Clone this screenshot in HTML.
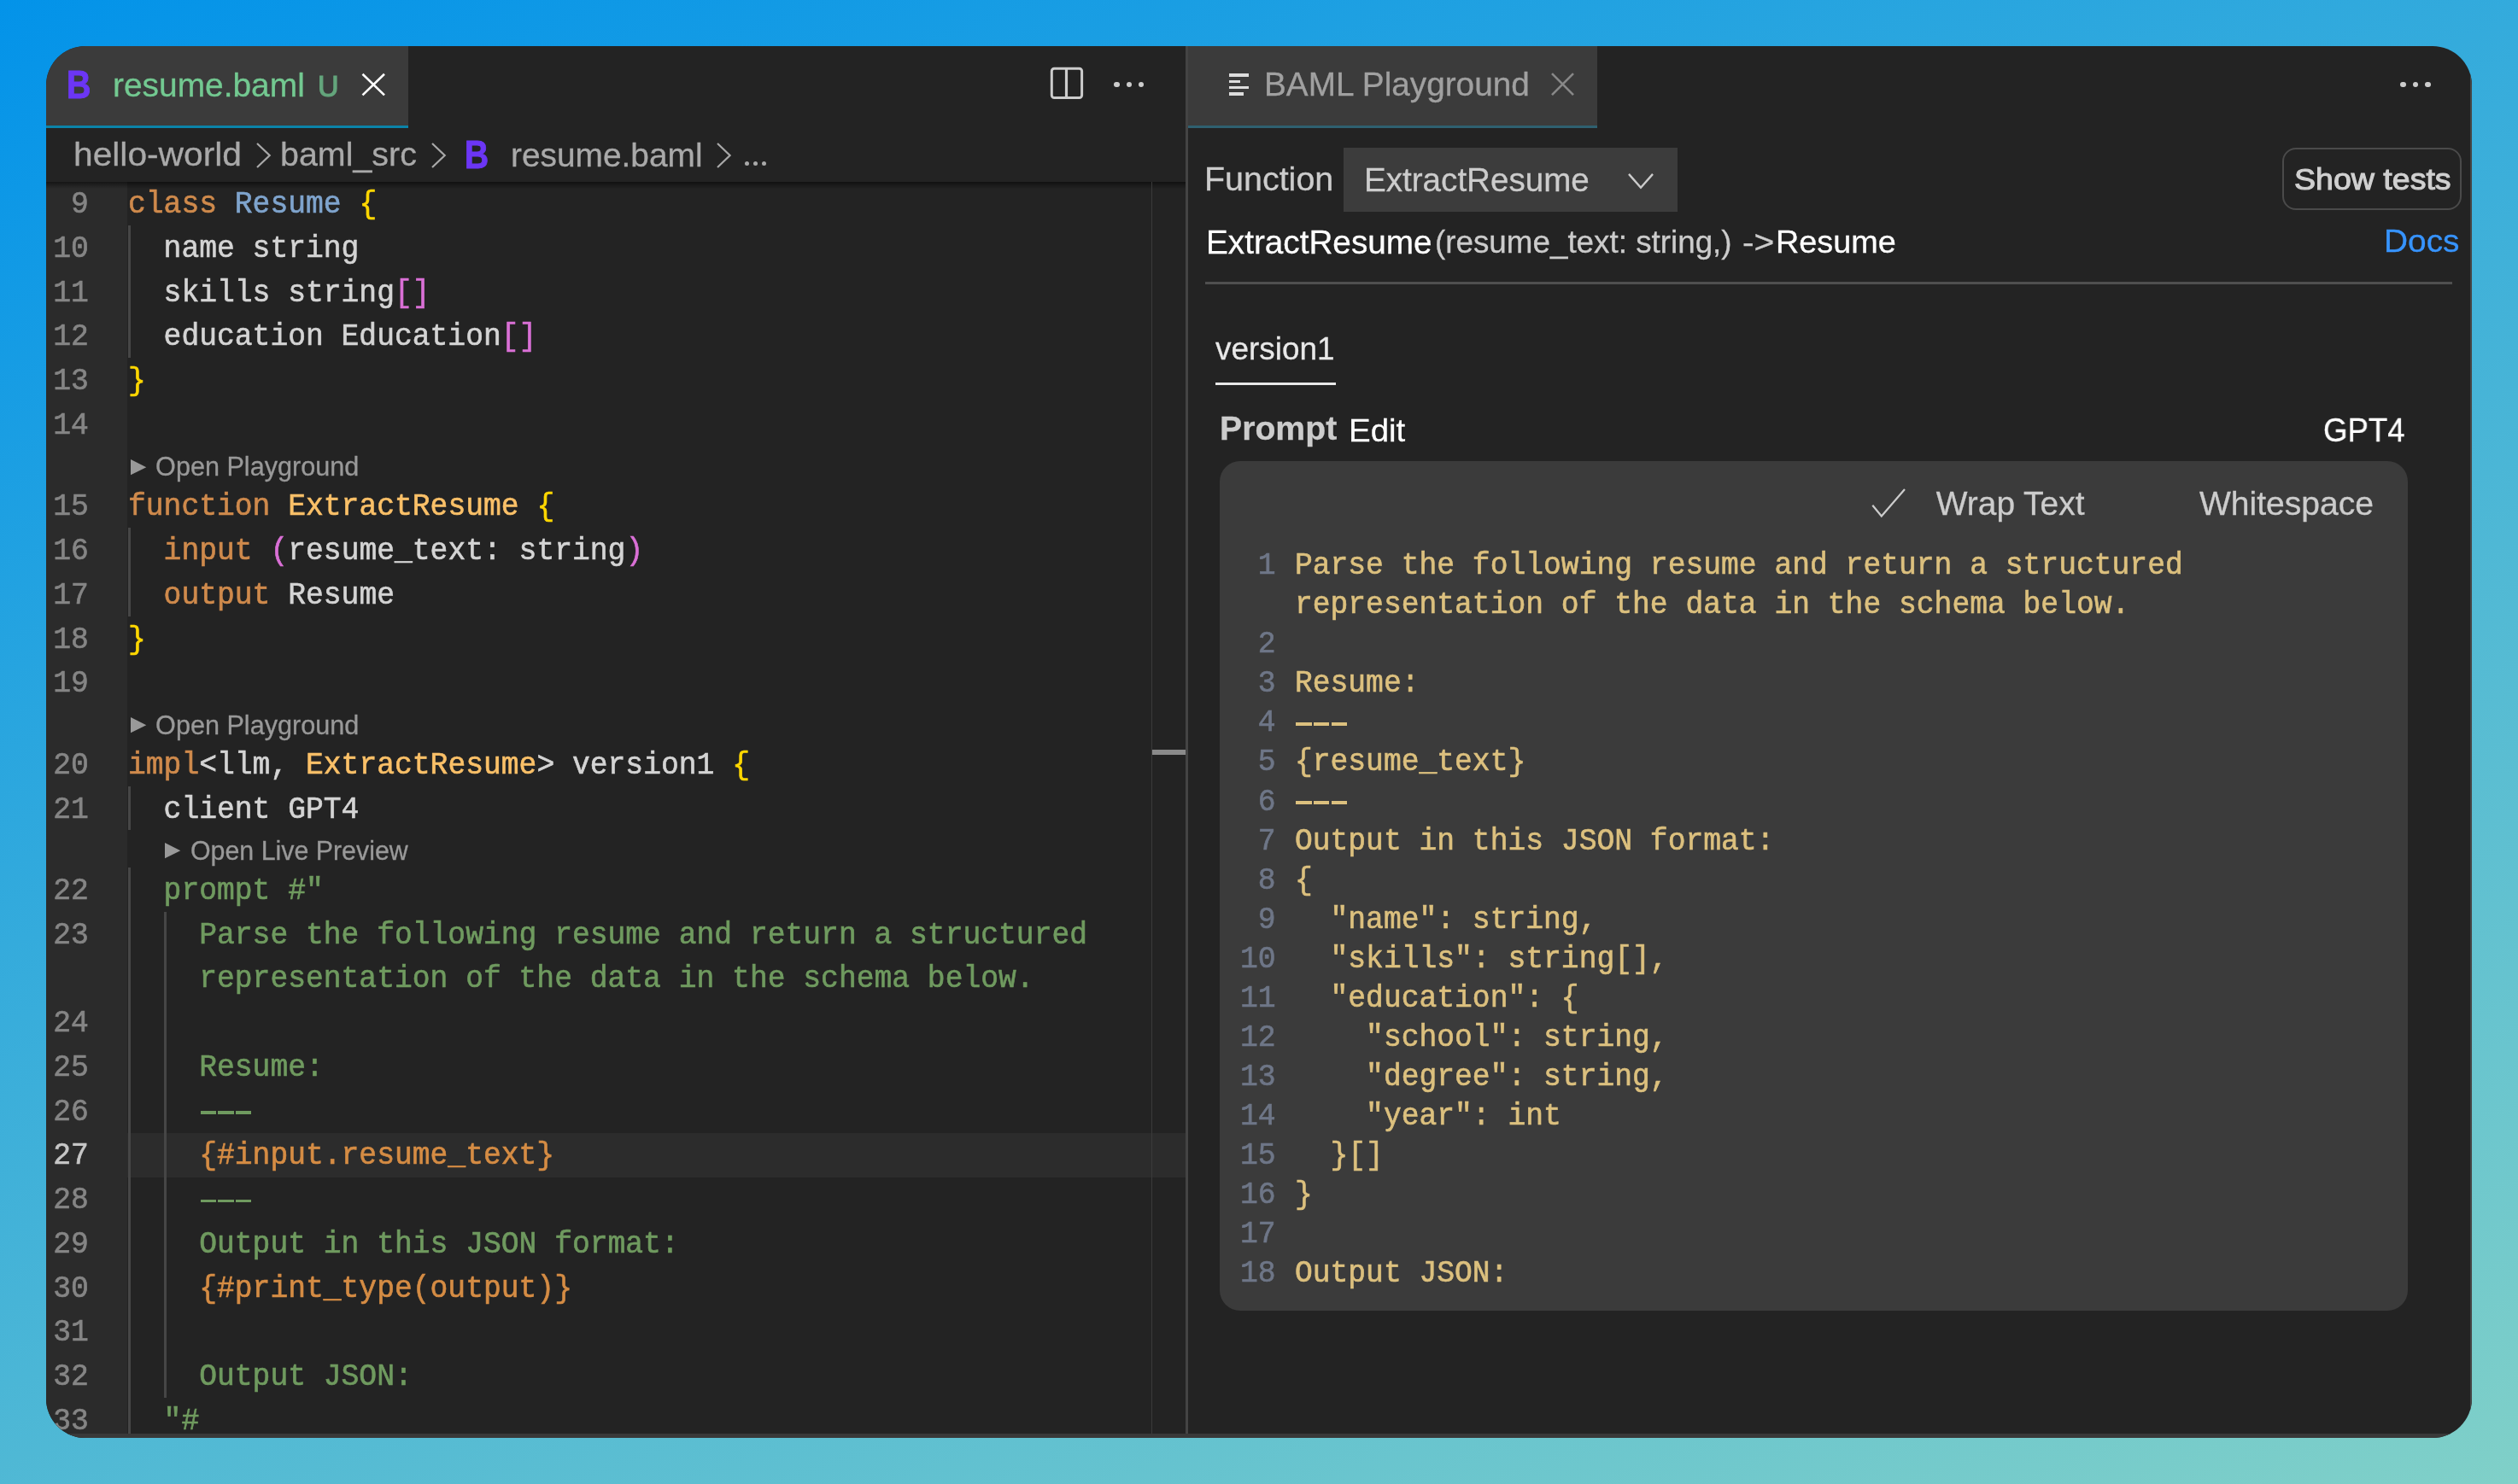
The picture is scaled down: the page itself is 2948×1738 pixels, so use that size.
<!DOCTYPE html>
<html><head><meta charset="utf-8"><title>resume.baml</title><style>
html,body{margin:0;padding:0}
body{width:2948px;height:1738px;position:relative;overflow:hidden;background:linear-gradient(159.8deg,#0393e9 0%,#80d0c8 100%);font-family:"Liberation Sans",sans-serif}
.win{position:absolute;left:54px;top:54px;width:2840px;height:1630px;border-radius:46px;overflow:hidden;background:#232323}
.inner{position:absolute;left:-54px;top:-54px;width:2948px;height:1738px;will-change:transform}
.t{position:absolute;white-space:pre;font-family:"Liberation Sans",sans-serif;-webkit-text-stroke:0.3px currentColor}
.r{position:absolute}
.m{position:absolute;white-space:pre;font-family:"Liberation Mono",monospace;font-size:34.67px;transform:scaleY(1.07);transform-origin:0 37.8px;margin-top:-1.2px;-webkit-text-stroke:0.6px currentColor}
.ln{text-align:right}
</style></head>
<body>
<div class="win">
<div class="inner">
<div class="r" style="left:54px;top:54px;width:424px;height:93px;background:#3b3b3b;"></div>
<div class="r" style="left:54px;top:147px;width:424px;height:3px;background:#0b83a8;"></div>
<div class="t" style="left:77.89px;top:75.45px;font-size:47px;line-height:47px;color:#6c36f5;font-weight:bold;transform:scaleX(0.8379);transform-origin:0 0;-webkit-text-stroke:1px #6c36f5;">B</div>
<div class="t" style="left:132.16px;top:80.53px;font-size:38.2px;line-height:38.2px;color:#73c991;transform:scaleX(1.0184);transform-origin:0 0;">resume.baml</div>
<div class="t" style="left:371.62px;top:83.67px;font-size:34.5px;line-height:34.5px;color:#64a57c;transform:scaleX(0.9905);transform-origin:0 0;-webkit-text-stroke:1.1px #64a57c;">U</div>
<svg class="r" style="left:420px;top:82px" width="35" height="34"><path d="M4.5 4.7 L30 29.4 M30 4.7 L4.5 29.4" stroke="#ffffff" stroke-width="2.6" fill="none"/></svg>
<svg class="r" style="left:1226px;top:75px" width="46" height="46"><rect x="5.3" y="5.3" width="35.3" height="34.2" rx="3" stroke="#cccccc" stroke-width="3" fill="none"/><path d="M22.5 5 V39.5" stroke="#cccccc" stroke-width="3.2"/></svg>
<div class="r" style="left:1304.2px;top:95.7px;width:6.4px;height:6.4px;border-radius:50%;background:#cccccc"></div>
<div class="r" style="left:1318.5px;top:95.7px;width:6.4px;height:6.4px;border-radius:50%;background:#cccccc"></div>
<div class="r" style="left:1333.0px;top:95.7px;width:6.4px;height:6.4px;border-radius:50%;background:#cccccc"></div>
<div class="t" style="left:86.34px;top:161.34px;font-size:39.6px;line-height:39.6px;color:#a9a9a9;transform:scaleX(1.0289);transform-origin:0 0;">hello-world</div>
<svg class="r" style="left:297.5px;top:164.5px" width="20.7" height="34.0"><path d="M3 3 L17.7 17.0 L3 31.0" stroke="#a9a9a9" stroke-width="2.2" fill="none"/></svg>
<div class="t" style="left:328.17px;top:162.02px;font-size:38.8px;line-height:38.8px;color:#a9a9a9;transform:scaleX(1.0155);transform-origin:0 0;">baml_src</div>
<svg class="r" style="left:503.3px;top:164.5px" width="20.7" height="34.0"><path d="M3 3 L17.7 17.0 L3 31.0" stroke="#a9a9a9" stroke-width="2.2" fill="none"/></svg>
<div class="t" style="left:543.82px;top:157.45px;font-size:47px;line-height:47px;color:#6c36f5;font-weight:bold;transform:scaleX(0.8276);transform-origin:0 0;-webkit-text-stroke:1px #6c36f5;">B</div>
<div class="t" style="left:597.66px;top:162.53px;font-size:38.2px;line-height:38.2px;color:#a9a9a9;transform:scaleX(1.0175);transform-origin:0 0;">resume.baml</div>
<svg class="r" style="left:836.9px;top:164.5px" width="20.6" height="34.0"><path d="M3 3 L17.6 17.0 L3 31.0" stroke="#a9a9a9" stroke-width="2.2" fill="none"/></svg>
<div class="r" style="left:871.9px;top:188.8px;width:5.2px;height:5.2px;border-radius:50%;background:#a9a9a9"></div>
<div class="r" style="left:881.7px;top:188.8px;width:5.2px;height:5.2px;border-radius:50%;background:#a9a9a9"></div>
<div class="r" style="left:891.5px;top:188.8px;width:5.2px;height:5.2px;border-radius:50%;background:#a9a9a9"></div>
<div class="r" style="left:54px;top:213px;width:95px;height:1471px;background:#2b2b2b;"></div>
<div class="r" style="left:149px;top:1326.6px;width:1239px;height:52.200000000000045px;background:#2c2c2c;"></div>
<div class="r" style="left:54px;top:213px;width:1334px;height:8px;background:linear-gradient(rgba(0,0,0,0.5),rgba(0,0,0,0))"></div>
<div class="r" style="left:150px;top:264.2px;width:3px;height:155.2px;background:#464646;"></div>
<div class="r" style="left:150px;top:618.3px;width:3px;height:103.5px;background:#464646;"></div>
<div class="r" style="left:150px;top:920.7px;width:3px;height:51.799999999999955px;background:#464646;"></div>
<div class="r" style="left:150px;top:1016.1px;width:3px;height:672.9px;background:#464646;"></div>
<div class="r" style="left:192px;top:1067.8px;width:3px;height:569.4000000000001px;background:#464646;"></div>
<div class="m" style="left:150.0px;top:212.40px;line-height:57.15px"><span style="color:#cf8a4c">class</span><span style="color:#d4d4d4"> </span><span style="color:#7fa4cd">Resume</span><span style="color:#d4d4d4"> </span><span style="color:#ffd700">{</span></div>
<div class="m ln" style="left:3px;width:100.8px;top:212.40px;line-height:57.15px;color:#858585">9</div>
<div class="m" style="left:150.0px;top:264.16px;line-height:57.15px"><span style="color:#d4d4d4">  name string</span></div>
<div class="m ln" style="left:3px;width:100.8px;top:264.16px;line-height:57.15px;color:#858585">10</div>
<div class="m" style="left:150.0px;top:315.92px;line-height:57.15px"><span style="color:#d4d4d4">  skills string</span><span style="color:#da70d6">[]</span></div>
<div class="m ln" style="left:3px;width:100.8px;top:315.92px;line-height:57.15px;color:#858585">11</div>
<div class="m" style="left:150.0px;top:367.68px;line-height:57.15px"><span style="color:#d4d4d4">  education Education</span><span style="color:#da70d6">[]</span></div>
<div class="m ln" style="left:3px;width:100.8px;top:367.68px;line-height:57.15px;color:#858585">12</div>
<div class="m" style="left:150.0px;top:419.44px;line-height:57.15px"><span style="color:#ffd700">}</span></div>
<div class="m ln" style="left:3px;width:100.8px;top:419.44px;line-height:57.15px;color:#858585">13</div>
<div class="m ln" style="left:3px;width:100.8px;top:471.20px;line-height:57.15px;color:#858585">14</div>
<svg class="r" style="left:152.9px;top:537.6px" width="19" height="19"><path d="M0 0 L18.3 9.15 L0 18.3 Z" fill="#999999"/></svg>
<div class="t" style="left:182.10px;top:531.35px;font-size:30.6px;line-height:30.6px;color:#999999;">Open Playground</div>
<div class="m" style="left:150.0px;top:566.56px;line-height:57.15px"><span style="color:#cf8a4c">function</span><span style="color:#d4d4d4"> </span><span style="color:#fac068">ExtractResume</span><span style="color:#d4d4d4"> </span><span style="color:#ffd700">{</span></div>
<div class="m ln" style="left:3px;width:100.8px;top:566.56px;line-height:57.15px;color:#858585">15</div>
<div class="m" style="left:150.0px;top:618.32px;line-height:57.15px"><span style="color:#d4d4d4">  </span><span style="color:#cf8a4c">input</span><span style="color:#d4d4d4"> </span><span style="color:#da70d6">(</span><span style="color:#d4d4d4">resume_text: string</span><span style="color:#da70d6">)</span></div>
<div class="m ln" style="left:3px;width:100.8px;top:618.32px;line-height:57.15px;color:#858585">16</div>
<div class="m" style="left:150.0px;top:670.08px;line-height:57.15px"><span style="color:#d4d4d4">  </span><span style="color:#cf8a4c">output</span><span style="color:#d4d4d4"> Resume</span></div>
<div class="m ln" style="left:3px;width:100.8px;top:670.08px;line-height:57.15px;color:#858585">17</div>
<div class="m" style="left:150.0px;top:721.84px;line-height:57.15px"><span style="color:#ffd700">}</span></div>
<div class="m ln" style="left:3px;width:100.8px;top:721.84px;line-height:57.15px;color:#858585">18</div>
<div class="m ln" style="left:3px;width:100.8px;top:773.60px;line-height:57.15px;color:#858585">19</div>
<svg class="r" style="left:152.9px;top:840.0px" width="19" height="19"><path d="M0 0 L18.3 9.15 L0 18.3 Z" fill="#999999"/></svg>
<div class="t" style="left:182.10px;top:833.75px;font-size:30.6px;line-height:30.6px;color:#999999;">Open Playground</div>
<div class="m" style="left:150.0px;top:868.96px;line-height:57.15px"><span style="color:#cf8a4c">impl</span><span style="color:#d4d4d4">&lt;llm, </span><span style="color:#fac068">ExtractResume</span><span style="color:#d4d4d4">&gt; version1 </span><span style="color:#ffd700">{</span></div>
<div class="m ln" style="left:3px;width:100.8px;top:868.96px;line-height:57.15px;color:#858585">20</div>
<div class="m" style="left:150.0px;top:920.72px;line-height:57.15px"><span style="color:#d4d4d4">  client GPT4</span></div>
<div class="m ln" style="left:3px;width:100.8px;top:920.72px;line-height:57.15px;color:#858585">21</div>
<svg class="r" style="left:193.3px;top:987.1px" width="19" height="19"><path d="M0 0 L18.3 9.15 L0 18.3 Z" fill="#999999"/></svg>
<div class="t" style="left:222.51px;top:980.87px;font-size:30.6px;line-height:30.6px;color:#999999;transform:scaleX(0.9918);transform-origin:0 0;">Open Live Preview</div>
<div class="m" style="left:150.0px;top:1016.08px;line-height:57.15px"><span style="color:#6f9a5f">  prompt #&quot;</span></div>
<div class="m ln" style="left:3px;width:100.8px;top:1016.08px;line-height:57.15px;color:#858585">22</div>
<div class="m" style="left:150.0px;top:1067.84px;line-height:57.15px"><span style="color:#6f9a5f">    Parse the following resume and return a structured</span></div>
<div class="m ln" style="left:3px;width:100.8px;top:1067.84px;line-height:57.15px;color:#858585">23</div>
<div class="m" style="left:150.0px;top:1119.60px;line-height:57.15px"><span style="color:#6f9a5f">    representation of the data in the schema below.</span></div>
<div class="m ln" style="left:3px;width:100.8px;top:1171.36px;line-height:57.15px;color:#858585">24</div>
<div class="m" style="left:150.0px;top:1223.12px;line-height:57.15px"><span style="color:#6f9a5f">    Resume:</span></div>
<div class="m ln" style="left:3px;width:100.8px;top:1223.12px;line-height:57.15px;color:#858585">25</div>
<div class="r" style="left:234.6px;top:1301.1px;width:18.30000000000001px;height:3.800000000000182px;background:#6f9a5f;"></div>
<div class="r" style="left:255.4px;top:1301.1px;width:18.299999999999983px;height:3.800000000000182px;background:#6f9a5f;"></div>
<div class="r" style="left:276.2px;top:1301.1px;width:18.30000000000001px;height:3.800000000000182px;background:#6f9a5f;"></div>
<div class="m" style="left:150.0px;top:1274.88px;line-height:57.15px"><span style="color:#6f9a5f">    </span></div>
<div class="m ln" style="left:3px;width:100.8px;top:1274.88px;line-height:57.15px;color:#858585">26</div>
<div class="m" style="left:150.0px;top:1326.64px;line-height:57.15px"><span style="color:#d58c44">    {#input.resume_text}</span></div>
<div class="m ln" style="left:3px;width:100.8px;top:1326.64px;line-height:57.15px;color:#c6c6c6">27</div>
<div class="r" style="left:234.6px;top:1404.6px;width:18.30000000000001px;height:3.800000000000182px;background:#6f9a5f;"></div>
<div class="r" style="left:255.4px;top:1404.6px;width:18.299999999999983px;height:3.800000000000182px;background:#6f9a5f;"></div>
<div class="r" style="left:276.2px;top:1404.6px;width:18.30000000000001px;height:3.800000000000182px;background:#6f9a5f;"></div>
<div class="m" style="left:150.0px;top:1378.40px;line-height:57.15px"><span style="color:#6f9a5f">    </span></div>
<div class="m ln" style="left:3px;width:100.8px;top:1378.40px;line-height:57.15px;color:#858585">28</div>
<div class="m" style="left:150.0px;top:1430.16px;line-height:57.15px"><span style="color:#6f9a5f">    Output in this JSON format:</span></div>
<div class="m ln" style="left:3px;width:100.8px;top:1430.16px;line-height:57.15px;color:#858585">29</div>
<div class="m" style="left:150.0px;top:1481.92px;line-height:57.15px"><span style="color:#d58c44">    {#print_type(output)}</span></div>
<div class="m ln" style="left:3px;width:100.8px;top:1481.92px;line-height:57.15px;color:#858585">30</div>
<div class="m ln" style="left:3px;width:100.8px;top:1533.68px;line-height:57.15px;color:#858585">31</div>
<div class="m" style="left:150.0px;top:1585.44px;line-height:57.15px"><span style="color:#6f9a5f">    Output JSON:</span></div>
<div class="m ln" style="left:3px;width:100.8px;top:1585.44px;line-height:57.15px;color:#858585">32</div>
<div class="m" style="left:150.0px;top:1637.20px;line-height:57.15px"><span style="color:#6f9a5f">  &quot;#</span></div>
<div class="m ln" style="left:3px;width:100.8px;top:1637.20px;line-height:57.15px;color:#858585">33</div>
<div class="r" style="left:1348px;top:213px;width:1px;height:1471px;background:#3a3a3a;"></div>
<div class="r" style="left:1349px;top:878px;width:39px;height:5.5px;background:#8a8a8a;"></div>
<div class="r" style="left:1388px;top:54px;width:3px;height:1630px;background:#444444;"></div>
<div class="r" style="left:1391px;top:54px;width:479px;height:93px;background:#3b3b3b;"></div>
<div class="r" style="left:1391px;top:147px;width:479px;height:3px;background:#2f6070;"></div>
<div class="r" style="left:1438.9px;top:86.1px;width:23.199999999999818px;height:3.5px;background:#dddddd;"></div>
<div class="r" style="left:1438.9px;top:93.6px;width:13.099999999999909px;height:3.5px;background:#dddddd;"></div>
<div class="r" style="left:1438.9px;top:100.8px;width:23.199999999999818px;height:3.5px;background:#dddddd;"></div>
<div class="r" style="left:1438.9px;top:108px;width:17.09999999999991px;height:3.5px;background:#dddddd;"></div>
<div class="t" style="left:1479.75px;top:80.41px;font-size:38.1px;line-height:38.1px;color:#a0a0a0;transform:scaleX(1.0173);transform-origin:0 0;">BAML Playground</div>
<svg class="r" style="left:1813px;top:82px" width="34" height="34"><path d="M4 4.2 L29 29.2 M29 4.2 L4 29.2" stroke="#888888" stroke-width="2.6" fill="none"/></svg>
<div class="r" style="left:2810.3px;top:95.7px;width:6.4px;height:6.4px;border-radius:50%;background:#cccccc"></div>
<div class="r" style="left:2824.8px;top:95.7px;width:6.4px;height:6.4px;border-radius:50%;background:#cccccc"></div>
<div class="r" style="left:2839.3px;top:95.7px;width:6.4px;height:6.4px;border-radius:50%;background:#cccccc"></div>
<div class="r" style="left:2892px;top:54px;width:2px;height:1630px;background:#464646;"></div>
<div class="t" style="left:1410.18px;top:191.98px;font-size:37.9px;line-height:37.9px;color:#cccccc;transform:scaleX(1.0407);transform-origin:0 0;">Function</div>
<div class="r" style="left:1573px;top:173.2px;width:391px;height:74.5px;background:#3c3c3c;"></div>
<div class="t" style="left:1596.95px;top:191.90px;font-size:38.0px;line-height:38.0px;color:#cccccc;transform:scaleX(1.0157);transform-origin:0 0;">ExtractResume</div>
<svg class="r" style="left:1903px;top:200px" width="36" height="24"><path d="M4 3.9 L18 19.8 L32 3.9" stroke="#cccccc" stroke-width="2.4" fill="none"/></svg>
<div class="r" style="left:2672.3px;top:173px;width:209.4px;height:73px;box-sizing:border-box;border:2px solid #4a4a4a;border-radius:16px"></div>
<div class="t" style="left:2685.55px;top:192.87px;font-size:35.8px;line-height:35.8px;color:#d0d0d0;transform:scaleX(1.0486);transform-origin:0 0;-webkit-text-stroke:1.1px #d0d0d0;">Show tests</div>
<div class="t" style="left:1412.44px;top:264.90px;font-size:38.0px;line-height:38.0px;color:#ffffff;transform:scaleX(1.0184);transform-origin:0 0;">ExtractResume</div>
<div class="t" style="left:1679.99px;top:266.09px;font-size:36.6px;line-height:36.6px;color:#cccccc;transform:scaleX(1.0058);transform-origin:0 0;">(resume_text: string,)</div>
<div class="t" style="left:2040.39px;top:266.09px;font-size:36.6px;line-height:36.6px;color:#cccccc;transform:scaleX(1.1129);transform-origin:0 0;">-&gt;</div>
<div class="t" style="left:2078.92px;top:265.83px;font-size:36.9px;line-height:36.9px;color:#ffffff;transform:scaleX(1.0256);transform-origin:0 0;">Resume</div>
<div class="t" style="left:2790.89px;top:264.23px;font-size:37.5px;line-height:37.5px;color:#3794ff;transform:scaleX(1.0354);transform-origin:0 0;">Docs</div>
<div class="r" style="left:1411px;top:330px;width:1460px;height:3px;background:#4f4f4f;"></div>
<div class="t" style="left:1423.00px;top:390.32px;font-size:37.5px;line-height:37.5px;color:#e8e8e8;transform:scaleX(0.9836);transform-origin:0 0;">version1</div>
<div class="r" style="left:1422.8px;top:448.4px;width:141.29999999999995px;height:3.0px;background:#e8e8e8;"></div>
<div class="t" style="left:1427.97px;top:483.39px;font-size:38.6px;line-height:38.6px;color:#cccccc;font-weight:bold;transform:scaleX(1.0165);transform-origin:0 0;">Prompt</div>
<div class="t" style="left:1578.52px;top:486.42px;font-size:37.5px;line-height:37.5px;color:#ffffff;transform:scaleX(1.0258);transform-origin:0 0;">Edit</div>
<div class="t" style="left:2720.10px;top:485.27px;font-size:38.5px;line-height:38.5px;color:#ffffff;transform:scaleX(0.9490);transform-origin:0 0;">GPT4</div>
<div class="r" style="left:1428px;top:540px;width:1390.6px;height:995.3px;background:#3b3b3b;border-radius:24px"></div>
<svg class="r" style="left:2188px;top:569px" width="46" height="40"><path d="M4.3 22.7 L14.8 35.5 L42 4" stroke="#cccccc" stroke-width="2.2" fill="none"/></svg>
<div class="t" style="left:2266.80px;top:570.63px;font-size:38.9px;line-height:38.9px;color:#cccccc;">Wrap Text</div>
<div class="t" style="left:2575.40px;top:570.72px;font-size:38.8px;line-height:38.8px;color:#cccccc;transform:scaleX(1.0065);transform-origin:0 0;">Whitespace</div>
<div class="m" style="left:1515.9px;top:635.40px;line-height:57.15px;color:#dcc07e">Parse the following resume and return a structured</div>
<div class="m ln" style="left:1400px;width:93.5px;top:635.40px;line-height:57.15px;color:#6e7687">1</div>
<div class="m" style="left:1515.9px;top:681.45px;line-height:57.15px;color:#dcc07e">representation of the data in the schema below.</div>
<div class="m ln" style="left:1400px;width:93.5px;top:727.50px;line-height:57.15px;color:#6e7687">2</div>
<div class="m" style="left:1515.9px;top:773.55px;line-height:57.15px;color:#dcc07e">Resume:</div>
<div class="m ln" style="left:1400px;width:93.5px;top:773.55px;line-height:57.15px;color:#6e7687">3</div>
<div class="r" style="left:1517.3px;top:845.8px;width:18.299999999999955px;height:3.800000000000068px;background:#dcc07e;"></div>
<div class="r" style="left:1538.1px;top:845.8px;width:18.300000000000182px;height:3.800000000000068px;background:#dcc07e;"></div>
<div class="r" style="left:1558.9px;top:845.8px;width:18.299999999999955px;height:3.800000000000068px;background:#dcc07e;"></div>
<div class="m ln" style="left:1400px;width:93.5px;top:819.60px;line-height:57.15px;color:#6e7687">4</div>
<div class="m" style="left:1515.9px;top:865.65px;line-height:57.15px;color:#dcc07e">{resume_text}</div>
<div class="m ln" style="left:1400px;width:93.5px;top:865.65px;line-height:57.15px;color:#6e7687">5</div>
<div class="r" style="left:1517.3px;top:937.9px;width:18.299999999999955px;height:3.800000000000068px;background:#dcc07e;"></div>
<div class="r" style="left:1538.1px;top:937.9px;width:18.300000000000182px;height:3.800000000000068px;background:#dcc07e;"></div>
<div class="r" style="left:1558.9px;top:937.9px;width:18.299999999999955px;height:3.800000000000068px;background:#dcc07e;"></div>
<div class="m ln" style="left:1400px;width:93.5px;top:911.70px;line-height:57.15px;color:#6e7687">6</div>
<div class="m" style="left:1515.9px;top:957.75px;line-height:57.15px;color:#dcc07e">Output in this JSON format:</div>
<div class="m ln" style="left:1400px;width:93.5px;top:957.75px;line-height:57.15px;color:#6e7687">7</div>
<div class="m" style="left:1515.9px;top:1003.80px;line-height:57.15px;color:#dcc07e">{</div>
<div class="m ln" style="left:1400px;width:93.5px;top:1003.80px;line-height:57.15px;color:#6e7687">8</div>
<div class="m" style="left:1515.9px;top:1049.85px;line-height:57.15px;color:#dcc07e">  &quot;name&quot;: string,</div>
<div class="m ln" style="left:1400px;width:93.5px;top:1049.85px;line-height:57.15px;color:#6e7687">9</div>
<div class="m" style="left:1515.9px;top:1095.90px;line-height:57.15px;color:#dcc07e">  &quot;skills&quot;: string[],</div>
<div class="m ln" style="left:1400px;width:93.5px;top:1095.90px;line-height:57.15px;color:#6e7687">10</div>
<div class="m" style="left:1515.9px;top:1141.95px;line-height:57.15px;color:#dcc07e">  &quot;education&quot;: {</div>
<div class="m ln" style="left:1400px;width:93.5px;top:1141.95px;line-height:57.15px;color:#6e7687">11</div>
<div class="m" style="left:1515.9px;top:1188.00px;line-height:57.15px;color:#dcc07e">    &quot;school&quot;: string,</div>
<div class="m ln" style="left:1400px;width:93.5px;top:1188.00px;line-height:57.15px;color:#6e7687">12</div>
<div class="m" style="left:1515.9px;top:1234.05px;line-height:57.15px;color:#dcc07e">    &quot;degree&quot;: string,</div>
<div class="m ln" style="left:1400px;width:93.5px;top:1234.05px;line-height:57.15px;color:#6e7687">13</div>
<div class="m" style="left:1515.9px;top:1280.10px;line-height:57.15px;color:#dcc07e">    &quot;year&quot;: int</div>
<div class="m ln" style="left:1400px;width:93.5px;top:1280.10px;line-height:57.15px;color:#6e7687">14</div>
<div class="m" style="left:1515.9px;top:1326.15px;line-height:57.15px;color:#dcc07e">  }[]</div>
<div class="m ln" style="left:1400px;width:93.5px;top:1326.15px;line-height:57.15px;color:#6e7687">15</div>
<div class="m" style="left:1515.9px;top:1372.20px;line-height:57.15px;color:#dcc07e">}</div>
<div class="m ln" style="left:1400px;width:93.5px;top:1372.20px;line-height:57.15px;color:#6e7687">16</div>
<div class="m ln" style="left:1400px;width:93.5px;top:1418.25px;line-height:57.15px;color:#6e7687">17</div>
<div class="m" style="left:1515.9px;top:1464.30px;line-height:57.15px;color:#dcc07e">Output JSON:</div>
<div class="m ln" style="left:1400px;width:93.5px;top:1464.30px;line-height:57.15px;color:#6e7687">18</div>
<div class="r" style="left:54px;top:1679px;width:2840px;height:5px;background:#393939;"></div>
</div></div>
</body></html>
